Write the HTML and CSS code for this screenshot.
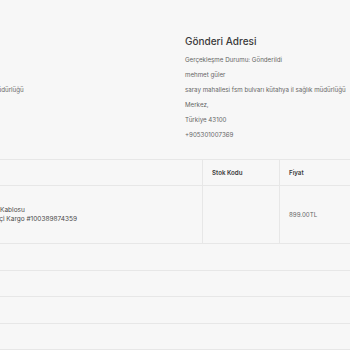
FILE: index.html
```html
<!DOCTYPE html>
<html lang="tr">

<head>
  <meta charset="UTF-8" />
  <meta name="viewport" content="width=device-width, initial-scale=1.0" />
  <title>Sipariş Detayı</title>
  <link rel="stylesheet" href="styles.css">
</head>

<body>
  <div class="page">
    <div class="addresses">
      <div class="address">
        <h3>Fatura Adresi</h3>
        <p>Gerçekleşme Durumu: Gönderildi</p>
        <p>mehmet güler</p>
        <p>saray mahallesi fsm bulvarı kütahya il sağlık müdürlüğü</p>
        <p>Merkez,</p>
        <p>Türkiye 43100</p>
        <p>+905301007369</p>
      </div>
      <div class="address">
        <h3>Gönderi Adresi</h3>
        <p>Gerçekleşme Durumu: Gönderildi</p>
        <p>mehmet güler</p>
        <p>saray mahallesi fsm bulvarı kütahya il sağlık müdürlüğü</p>
        <p>Merkez,</p>
        <p>Türkiye 43100</p>
        <p>+905301007369</p>
      </div>
    </div>

    <table class="items">
      <thead>
        <tr>
          <th class="col-product">Ürün</th>
          <th class="col-code">Stok Kodu</th>
          <th class="col-price">Fiyat</th>
        </tr>
      </thead>
      <tbody>
        <tr class="item-row">
          <td class="col-product">
            <div class="product-name">USB Kablosu</div>
            <div class="product-cargo">Yurtiçi Kargo #100389874359</div>
          </td>
          <td class="col-code"></td>
          <td class="col-price">899.00TL</td>
        </tr>
        <tr class="sum-row"><td colspan="3"></td></tr>
        <tr class="sum-row"><td colspan="3"></td></tr>
        <tr class="sum-row"><td colspan="3"></td></tr>
        <tr class="sum-row"><td colspan="3"></td></tr>
      </tbody>
    </table>
  </div>
</body>

</html>
```

FILE: styles.css
```css
body {
  margin: 0;
  background-color: #f7f7f7;
  font-family: Inter, "Noto Sans", sans-serif;
  color: #666666;
  overflow: hidden;
}

.page {
  width: 700px;
  margin-left: -152px;
  padding: 34px 15px 0;
}

.addresses {
  display: grid;
  grid-template-columns: 322px 322px;
}

.address h3 {
  margin: 0 0 4px;
  font-size: 10px;
  font-weight: 500;
  line-height: 14px;
  color: #3a3a3a;
}

.address p {
  margin: 0;
  font-size: 6.2px;
  line-height: 15px;
  white-space: nowrap;
}

.items {
  margin-top: 17px;
  width: 560px;
  table-layout: fixed;
  border-collapse: collapse;
  font-size: 6.2px;
}

.items th,
.items td {
  border-top: 1px solid #e7e7e7;
  border-bottom: 1px solid #e7e7e7;
  text-align: left;
  padding: 0 9px;
  white-space: nowrap;
}

.items th {
  height: 25px;
  font-weight: 600;
  color: #3a3a3a;
}

.col-product {
  width: 321px;
}

.col-code {
  width: 58px;
  border-left: 1px solid #e7e7e7;
  border-right: 1px solid #e7e7e7;
}

.item-row td {
  height: 57px;
}

.item-row .col-product {
  padding-left: 122px;
  line-height: 9px;
  font-size: 6.5px;
  color: #4a4a4a;
}

.sum-row td {
  height: 25.5px;
}
```
